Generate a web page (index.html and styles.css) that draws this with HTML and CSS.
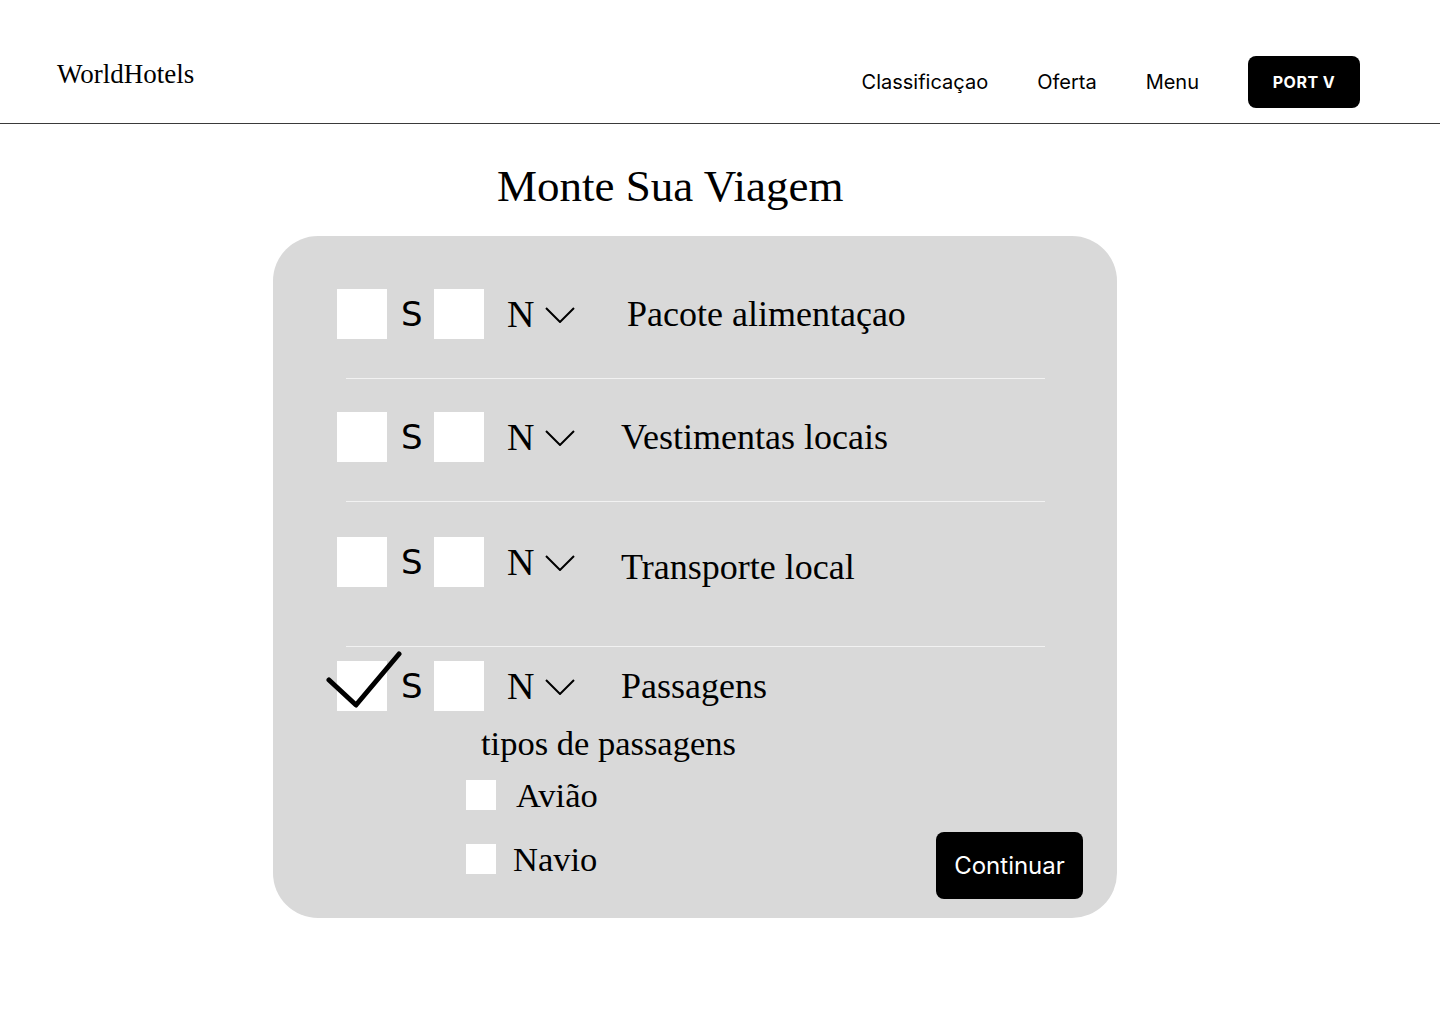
FILE: index.html
```html
<!DOCTYPE html>
<html lang="pt">
<head>
<meta charset="utf-8">
<title>WorldHotels</title>
<link rel="stylesheet" href="styles.css">
</head>
<body>
<header class="topbar">
  <div class="logo">WorldHotels</div>
  <nav class="nav">
    <a class="nav-link">Classificaçao</a>
    <a class="nav-link">Oferta</a>
    <a class="nav-link">Menu</a>
    <button class="lang-btn">PORT V</button>
  </nav>
</header>
<main class="main">
  <h1 class="title">Monte Sua Viagem</h1>
  <section class="card">
    <div class="row row-1">
      <span class="box"></span><span class="yn yn-s">S</span><span class="box"></span><span class="yn yn-n">N</span>
      <svg class="chev" viewBox="0 0 30 16"><path d="M1 1 L15 15 L29 1" fill="none" stroke="#000" stroke-width="2"/></svg>
      <span class="label label-first">Pacote alimentaçao</span>
    </div>
    <div class="divider div-1"></div>
    <div class="row row-2">
      <span class="box"></span><span class="yn yn-s">S</span><span class="box"></span><span class="yn yn-n">N</span>
      <svg class="chev" viewBox="0 0 30 16"><path d="M1 1 L15 15 L29 1" fill="none" stroke="#000" stroke-width="2"/></svg>
      <span class="label">Vestimentas locais</span>
    </div>
    <div class="divider div-2"></div>
    <div class="row row-3">
      <span class="box"></span><span class="yn yn-s">S</span><span class="box"></span><span class="yn yn-n">N</span>
      <svg class="chev" viewBox="0 0 30 16"><path d="M1 1 L15 15 L29 1" fill="none" stroke="#000" stroke-width="2"/></svg>
      <span class="label label-low">Transporte local</span>
    </div>
    <div class="divider div-3"></div>
    <div class="row row-4">
      <span class="box box-checked">
        <svg class="check" viewBox="0 0 76 60"><path d="M3 29 L30 54 L73 3" fill="none" stroke="#000" stroke-width="5" stroke-linecap="round" stroke-linejoin="round"/></svg>
      </span><span class="yn yn-s">S</span><span class="box"></span><span class="yn yn-n">N</span>
      <svg class="chev" viewBox="0 0 30 16"><path d="M1 1 L15 15 L29 1" fill="none" stroke="#000" stroke-width="2"/></svg>
      <span class="label">Passagens</span>
    </div>
    <div class="sub">
      <div class="sub-title">tipos de passagens</div>
      <div class="bottom">
        <div class="options">
          <label class="opt opt-1"><span class="mini"></span><span class="opt-text">Avião</span></label>
          <label class="opt opt-2"><span class="mini"></span><span class="opt-text opt-text-2">Navio</span></label>
        </div>
        <button class="continue">Continuar</button>
      </div>
    </div>
  </section>
</main>
</body>
</html>
```
FILE: styles.css
```css
* { box-sizing: border-box; }
body {
  margin: 0;
  background: #fff;
  color: #000;
  font-family: "Liberation Serif", "DejaVu Serif", serif;
}
.topbar {
  height: 124px;
  border-bottom: 1px solid #3a3a3a;
  display: flex;
  align-items: flex-start;
  justify-content: space-between;
  padding: 0 80px 0 57px;
}
.logo {
  font-size: 27px;
  margin-top: 59px;
  line-height: 30px;
}
.nav {
  display: flex;
  align-items: center;
  margin-top: 56px;
  height: 52px;
}
.nav-link {
  font-family: "Inter", sans-serif;
  font-size: 20px;
  color: #000;
  margin-right: 49px;
}
.lang-btn {
  font-family: "Inter", sans-serif;
  font-weight: 700;
  font-size: 16px;
  color: #fff;
  background: #000;
  border: none;
  border-radius: 8px;
  width: 112px;
  height: 52px;
  letter-spacing: 0.5px;
}
.main {
  padding-left: 273px;
}
.title {
  font-weight: 400;
  font-size: 45px;
  line-height: 50px;
  margin: 37px 0 0 0;
  padding-left: 224px;
  height: 75px;
}
.card {
  width: 844px;
  height: 682px;
  background: #d9d9d9;
  border-radius: 45px;
  padding: 53px 0 0 64px;
  display: flex;
  flex-direction: column;
}
.row {
  display: flex;
  align-items: center;
  height: 50px;
}
.box {
  width: 50px;
  height: 50px;
  background: #fff;
  position: relative;
  flex: none;
}
.yn {
  font-size: 38px;
  line-height: 50px;
}
.yn-s { width: 47px; padding-left: 14px; font-family: "DejaVu Sans", sans-serif; font-size: 34px; }
.yn-n { margin-left: 23px; width: 38px; }
.chev { width: 30px; height: 16px; margin-top: 2px; }
.label {
  font-size: 36px;
  margin-left: 46px;
  line-height: 50px;
}
.label-first { margin-left: 52px; }
.label-low { position: relative; top: 5px; }
.divider {
  height: 1px;
  background: #f2f2f2;
  width: 699px;
  margin-left: 9px;
}
.div-1 { margin-top: 39px; margin-bottom: 33px; }
.div-2 { margin-top: 39px; margin-bottom: 35px; }
.div-3 { margin-top: 59px; margin-bottom: 14px; }
.check {
  position: absolute;
  left: -11px;
  top: -10px;
  width: 76px;
  height: 60px;
}
.sub {
  padding-left: 144px;
}
.sub-title {
  font-size: 34.5px;
  line-height: 40px;
  margin-top: 12px;
}
.bottom {
  display: flex;
  justify-content: space-between;
  align-items: flex-start;
  width: 602px;
  margin-left: -15px;
  padding-right: 0;
}
.bottom { width: 617px; }
.options {
  display: flex;
  flex-direction: column;
  margin-top: 17px;
}
.opt {
  display: flex;
  align-items: center;
  height: 30px;
}
.opt-2 { margin-top: 34px; }
.mini {
  width: 30px;
  height: 30px;
  background: #fff;
}
.opt-text {
  font-size: 34.5px;
  margin-left: 20px;
}
.opt-text-2 { margin-left: 17px; }
.continue {
  font-family: "Inter", sans-serif;
  font-size: 24px;
  color: #fff;
  background: #000;
  border: none;
  border-radius: 8px;
  width: 147px;
  height: 67px;
  margin-top: 69px;
}
```
